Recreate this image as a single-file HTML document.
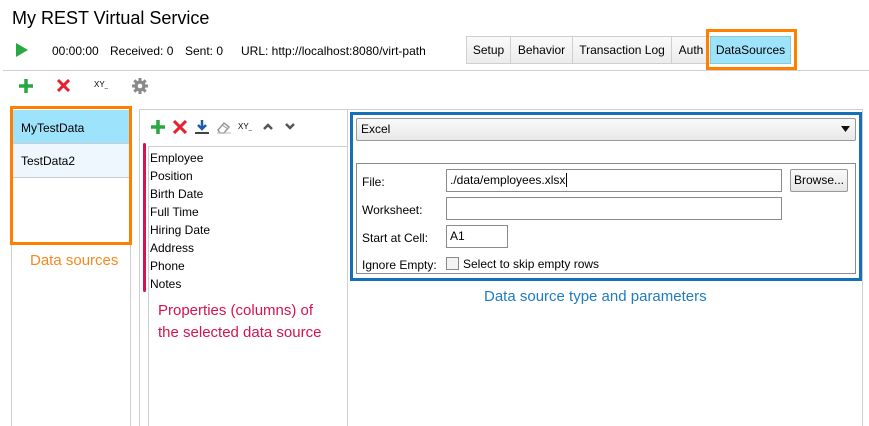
<!DOCTYPE html>
<html><head><meta charset="utf-8"><style>
*{margin:0;padding:0;box-sizing:border-box}
body{width:869px;height:426px;background:#fff;font-family:"Liberation Sans",sans-serif;font-size:12px;color:#000;position:relative;overflow:hidden}
.a{position:absolute;white-space:nowrap}
.ln{position:absolute;background:#cfcfcf}
.tab{position:absolute;top:36px;height:28px;border:1px solid #cfcfcf;background:linear-gradient(#fafafa,#ececec);line-height:26px;text-align:center;font-size:12px}
.inp{position:absolute;border:1px solid #8a8a8a;background:#fff;height:23px;line-height:21px;padding-left:3px;font-size:12px}
.lab{position:absolute;left:362px;font-size:12px}
</style></head><body>
<div class="a" style="left:12px;top:8px;font-size:18px">My REST Virtual Service</div>
<svg class="a" style="left:15px;top:43px" width="14" height="14"><path d="M1 0L13 7L1 14Z" fill="#27a844"/></svg>
<div class="a" style="left:52px;top:44px">00:00:00</div>
<div class="a" style="left:110px;top:44px">Received: 0</div>
<div class="a" style="left:185px;top:44px">Sent: 0</div>
<div class="a" style="left:241px;top:44px">URL: http://localhost:8080/virt-path</div>
<div class="tab" style="left:466px;width:45px">Setup</div>
<div class="tab" style="left:510px;width:63px">Behavior</div>
<div class="tab" style="left:572px;width:100px">Transaction Log</div>
<div class="tab" style="left:671px;width:40px">Auth</div>
<div class="tab" style="left:710px;width:81px;background:#9de3fb;border-color:#8cc">DataSources</div>
<div class="a" style="left:706px;top:29px;width:91px;height:41px;border:3px solid #ff7f00"></div>
<div class="ln" style="left:3px;top:70px;width:866px;height:1px"></div>
<svg class="a" style="left:19px;top:79px" width="14" height="14"><path d="M7 0V14M0 7H14" stroke="#27a844" stroke-width="3.5"/></svg>
<svg class="a" style="left:57px;top:79px" width="13" height="13"><path d="M1 1L12 12M12 1L1 12" stroke="#e8202e" stroke-width="3"/></svg>
<div class="a" style="left:94px;top:80px;font-size:8px">XY<span style="font-size:6px">_</span></div>
<svg class="a" style="left:132px;top:78px" width="16" height="16" viewBox="0 0 16 16"><g fill="#8a8a8a"><circle cx="8" cy="8" r="5.5"/><g stroke="#8a8a8a" stroke-width="3"><path d="M8 0V16M0 8H16M2.3 2.3L13.7 13.7M13.7 2.3L2.3 13.7"/></g></g><circle cx="8" cy="8" r="2.3" fill="#fff"/></svg>
<!-- left panel -->
<div class="ln" style="left:11px;top:108px;width:1px;height:318px"></div>
<div class="ln" style="left:130px;top:108px;width:1px;height:318px"></div>
<div class="a" style="left:12px;top:110px;width:118px;height:34px;background:#9de3fb;border-bottom:1px solid #ccc;padding:11px 0 0 9px">MyTestData</div>
<div class="a" style="left:12px;top:144px;width:118px;height:34px;background:#eef7fd;border-bottom:1px solid #ccc;padding:10px 0 0 9px">TestData2</div>
<div class="a" style="left:10px;top:106px;width:122px;height:139px;border:3px solid #ff7f00"></div>
<div class="a" style="left:30px;top:252px;font-size:15px;color:#f5891f">Data sources</div>
<!-- middle -->
<div class="ln" style="left:139px;top:109px;width:724px;height:1px"></div>
<div class="ln" style="left:139px;top:109px;width:1px;height:317px"></div>
<div class="ln" style="left:347px;top:109px;width:1px;height:317px"></div>
<div class="ln" style="left:862px;top:109px;width:1px;height:317px"></div>
<svg class="a" style="left:151px;top:120px" width="14" height="14"><path d="M7 0V14M0 7H14" stroke="#27a844" stroke-width="3.5"/></svg>
<svg class="a" style="left:173px;top:120px" width="14" height="14"><path d="M1 1L13 13M13 1L1 13" stroke="#e8202e" stroke-width="3"/></svg>
<svg class="a" style="left:194px;top:119px" width="16" height="16"><path d="M8 1V10M4 6L8 10L12 6" stroke="#1e5aa8" stroke-width="2.5" fill="none"/><path d="M1 14H15" stroke="#444" stroke-width="2"/></svg>
<svg class="a" style="left:216px;top:120px" width="16" height="14"><path d="M2 10L8 3L13 7L8 13H4Z" fill="none" stroke="#999" stroke-width="1.5"/><path d="M6 5L12 9" stroke="#999"/><path d="M1 13H15" stroke="#bbb"/></svg>
<div class="a" style="left:238px;top:122px;font-size:8px">XY<span style="font-size:6px">_</span></div>
<svg class="a" style="left:263px;top:123px" width="10" height="7"><path d="M1 6L5 2L9 6" stroke="#555" stroke-width="2.5" fill="none"/></svg>
<svg class="a" style="left:285px;top:123px" width="10" height="7"><path d="M1 1L5 5L9 1" stroke="#555" stroke-width="2.5" fill="none"/></svg>
<div class="ln" style="left:148px;top:146px;width:199px;height:1px"></div>
<div class="ln" style="left:148px;top:146px;width:1px;height:280px"></div>
<div class="a" style="left:143px;top:143px;width:3px;height:149px;background:#d6134f;border-radius:2px"></div>
<div class="a" style="left:150px;top:149px;line-height:18px;font-size:12px;white-space:pre">Employee
Position
Birth Date
Full Time
Hiring Date
Address
Phone
Notes</div>
<div class="a" style="left:158px;top:300px;font-size:15px;color:#d6134f;line-height:22px;white-space:pre">Properties (columns) of
the selected data source</div>
<!-- right -->
<div class="a" style="left:350px;top:112px;width:512px;height:169px;border:3px solid #1670b6"></div>
<div class="a" style="left:356px;top:118px;width:500px;height:23px;border:1px solid #999;border-radius:2px;background:linear-gradient(#fafafa,#e8e8e8);padding:3px 0 0 4px">Excel</div>
<svg class="a" style="left:841px;top:126px" width="9" height="6"><path d="M0 0H9L4.5 6Z" fill="#111"/></svg>
<div class="a" style="left:356px;top:163px;width:500px;height:111px;border:1px solid #8a8a8a"></div>
<div class="lab" style="top:175px">File:</div>
<div class="lab" style="top:203px">Worksheet:</div>
<div class="lab" style="top:231px">Start at Cell:</div>
<div class="lab" style="top:258px">Ignore Empty:</div>
<div class="inp" style="left:446px;top:169px;width:336px">./data/employees.xlsx<span style="border-left:1px solid #000;margin-left:1px"></span></div>
<div class="a" style="left:790px;top:169px;width:58px;height:23px;border:1px solid #999;border-radius:2px;background:linear-gradient(#fafafa,#e6e6e6);text-align:center;line-height:21px">Browse...</div>
<div class="inp" style="left:446px;top:197px;width:336px"></div>
<div class="inp" style="left:446px;top:225px;width:62px">A1</div>
<div class="a" style="left:446px;top:257px;width:13px;height:13px;border:1px solid #888;background:#f3f3f3"></div>
<div class="a" style="left:463px;top:257px">Select to skip empty rows</div>
<div class="a" style="left:484px;top:288px;font-size:15px;color:#1f7cc1">Data source type and parameters</div>
</body></html>
